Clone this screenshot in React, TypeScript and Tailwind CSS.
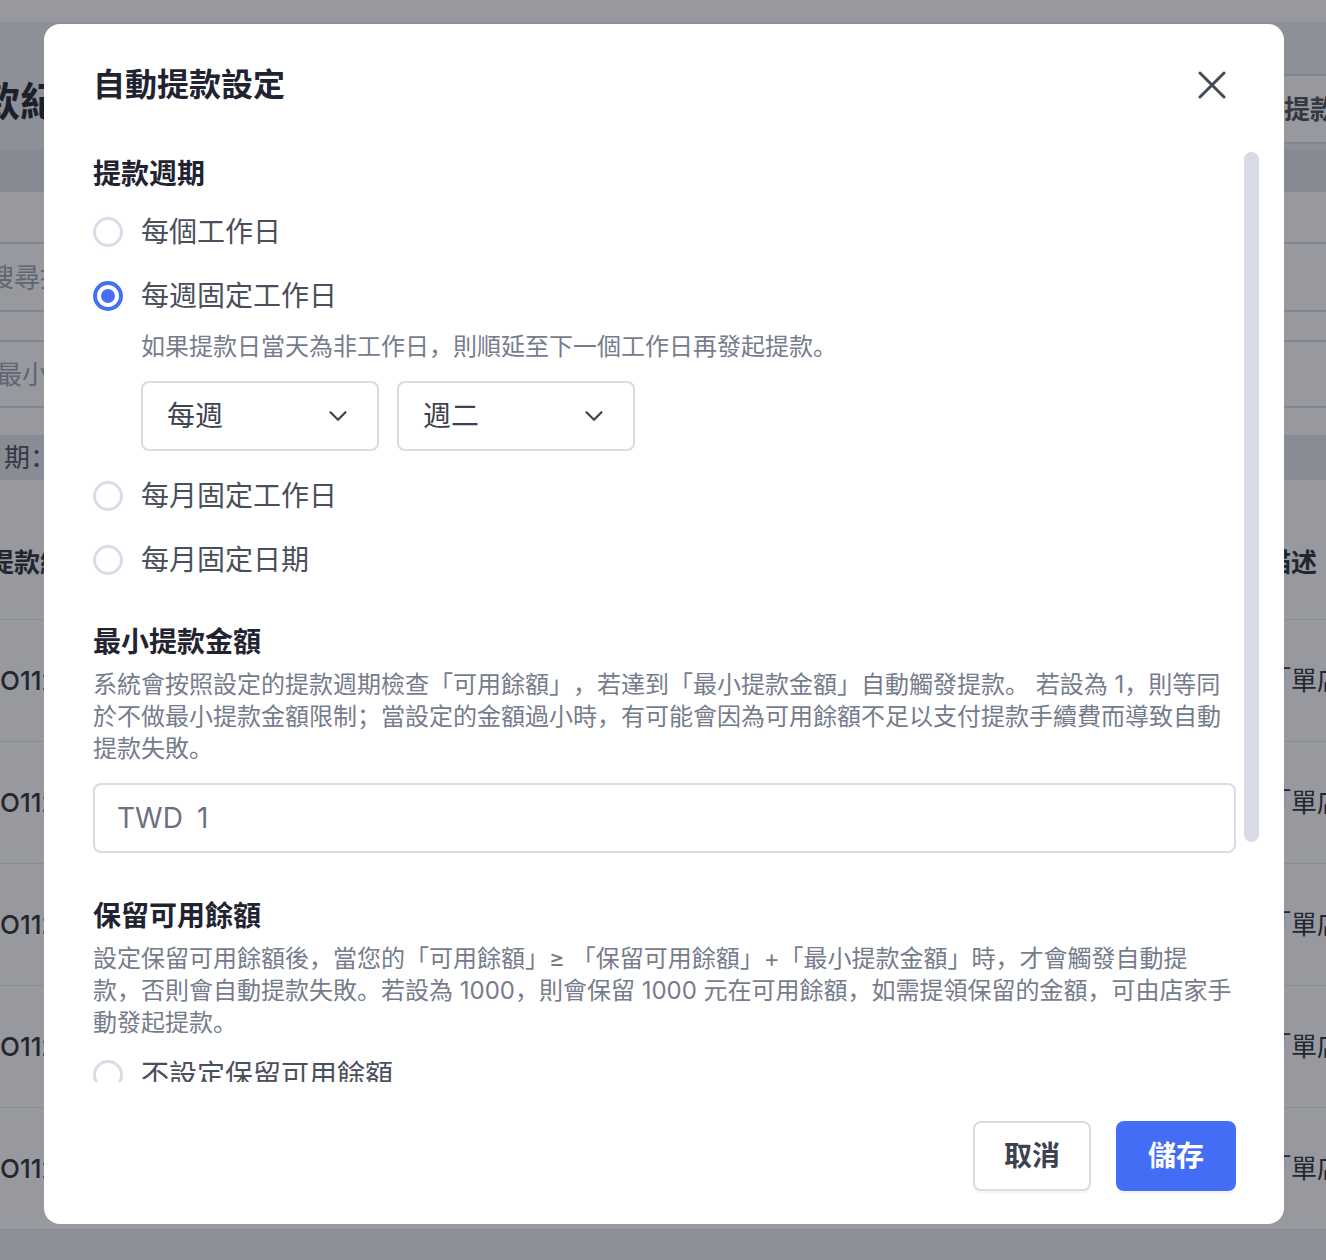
import { ChevronDown } from "lucide-react";

const rowIds = ["O11201050001", "O11201040003", "O11201030002", "O11201020001", "O11201010004"];

function BackgroundPage() {
  return (
    <div className="h-[1260px] w-full overflow-hidden bg-white">
      <div className="h-[22px] bg-white" />
      <div className="-ml-[12px] -mr-[150px] flex h-[1238px] flex-col bg-[#eceef2]">
        <div className="flex h-[128px] items-start justify-between pt-[52px]">
          <h1 className="-ml-[48px] text-[40px] font-bold leading-[56px] text-[#1f2430]">提款紀錄</h1>
          <button className="mr-[62px] h-[70px] rounded-lg border-2 border-[#d9dbe6] bg-white px-6 text-[26px] font-bold text-[#4a4f5c]">
            自動提款設定
          </button>
        </div>
        <div className="h-[42px] bg-[#e2e4ea]" />
        <div className="flex flex-col bg-white pt-[50px]">
          <div className="flex h-[70px] items-center border-y-2 border-[#d9dbe6] text-[26px] text-[#9aa0ad]">搜尋提款編號</div>
          <div className="mt-[28px] flex h-[68px] items-center border-y-2 border-[#d9dbe6] pl-[8px] text-[26px] text-[#9aa0ad]">最小金額</div>
          <div className="mt-[27px] flex h-[45px] items-center bg-[#e6e8ed] text-[26px] text-[#4a4f5c]">
            <span className="-ml-[10px]">日期：</span>
          </div>
          <div className="mt-[25px] flex h-[115px] items-center justify-between border-b border-[#e3e5ea] text-[26px] font-bold text-[#2b2f3a]">
            <span>提款編號</span>
            <span className="w-[211px] whitespace-nowrap">描述</span>
          </div>
          {rowIds.map((id) => (
            <div key={id} className="flex h-[122px] items-center justify-between border-b border-[#e3e5ea] text-[26px] text-[#2b2f3a]">
              <span className="pl-[12px] font-medium">{id}</span>
              <span className="w-[211px] whitespace-nowrap">「單店自動提款」</span>
            </div>
          ))}
        </div>
      </div>
    </div>
  );
}

function Radio({ checked = false, label }: { checked?: boolean; label: string }) {
  return (
    <label className="flex h-[40px] items-center gap-[18px]">
      {checked ? (
        <span className="flex h-[30px] w-[30px] items-center justify-center rounded-full border-[4px] border-[#4570f4]">
          <span className="h-[14px] w-[14px] rounded-full bg-[#4570f4]" />
        </span>
      ) : (
        <span className="h-[30px] w-[30px] rounded-full border-[3px] border-[#d9dbe6]" />
      )}
      <span className="text-[28px] leading-[40px] text-[#4a4f5c]">{label}</span>
    </label>
  );
}

function SelectBox({ value }: { value: string }) {
  return (
    <div className="flex h-[70px] w-[238px] items-center justify-between rounded-lg border-2 border-[#d9dbe6] pl-[24px] pr-[24px]">
      <span className="text-[28px] text-[#3d4250]">{value}</span>
      <ChevronDown className="h-[30px] w-[30px] text-[#3d4250]" strokeWidth={1.7} />
    </div>
  );
}

export default function App() {
  return (
    <div className="relative h-[1260px] w-full overflow-hidden font-['Inter','Noto_Sans_CJK_SC',sans-serif]">
      <BackgroundPage />

      <div className="absolute inset-0 bg-[rgba(24,28,40,0.45)] pl-[44px] pt-[24px]">
        <div className="flex h-[1200px] w-[1240px] flex-col rounded-2xl bg-white">
          {/* header */}
          <div className="flex h-[122px] shrink-0 items-center justify-between pl-[49px] pr-[58px]">
            <h2 className="text-[32px] font-bold text-[#1f2430]">自動提款設定</h2>
            <svg width="28" height="28" viewBox="0 0 28 28" fill="none" stroke="#454a57" strokeWidth="3" strokeLinecap="round">
              <path d="M2 2L26 26M26 2L2 26" />
            </svg>
          </div>

          {/* scroll body */}
          <div className="relative flex-1 overflow-hidden pl-[49px] pr-[48px] [text-spacing-trim:space-all]">
            <div className="absolute right-[25px] top-[6px] h-[690px] w-[15px] rounded-full bg-[#d8dae4]" />

            <div className="pt-[8px]">
              <h3 className="text-[28px] font-bold leading-[40px] text-[#1f2430]">提款週期</h3>
              <div className="mt-[18px]">
                <Radio label="每個工作日" />
              </div>
              <div className="mt-[24px]">
                <Radio checked label="每週固定工作日" />
              </div>
              <div className="pl-[48px]">
                <p className="mt-[15px] text-[24px] leading-[32px] text-[#767c8c]">
                  如果提款日當天為非工作日，則順延至下一個工作日再發起提款。
                </p>
                <div className="mt-[18px] flex gap-[18px]">
                  <SelectBox value="每週" />
                  <SelectBox value="週二" />
                </div>
              </div>
              <div className="mt-[25px]">
                <Radio label="每月固定工作日" />
              </div>
              <div className="mt-[24px]">
                <Radio label="每月固定日期" />
              </div>

              <h3 className="mt-[42px] text-[28px] font-bold leading-[40px] text-[#1f2430]">最小提款金額</h3>
              <p className="mt-[7px] text-[24px] leading-[32px] text-[#767c8c]">
                系統會按照設定的提款週期檢查「可用餘額」，若達到「最小提款金額」自動觸發提款。 若設為 1，則等同
                <br />
                於不做最小提款金額限制；當設定的金額過小時，有可能會因為可用餘額不足以支付提款手續費而導致自動
                <br />
                提款失敗。
              </p>
              <div className="mt-[18px] flex h-[70px] items-center gap-[14px] rounded-lg border-2 border-[#d9dbe6] px-[22px] text-[28px] text-[#6b7080]">
                <span>TWD</span>
                <span>1</span>
              </div>

              <h3 className="mt-[43px] text-[28px] font-bold leading-[40px] text-[#1f2430]">保留可用餘額</h3>
              <p className="mt-[7px] text-[24px] leading-[32px] text-[#767c8c]">
                設定保留可用餘額後，當您的「可用餘額」≥ 「保留可用餘額」+「最小提款金額」時，才會觸發自動提
                <br />
                款，否則會自動提款失敗。若設為 1000，則會保留 1000 元在可用餘額，如需提領保留的金額，可由店家手
                <br />
                動發起提款。
              </p>
              <div className="mt-[16px]">
                <Radio label="不設定保留可用餘額" />
              </div>
            </div>
          </div>

          {/* footer */}
          <div className="flex h-[142px] shrink-0 justify-end gap-[25px] pr-[48px] pt-[39px]">
            <button className="h-[70px] w-[118px] rounded-lg border-2 border-[#d9dbe6] bg-white text-[28px] font-bold text-[#3d4250] shadow-[0_3px_0_rgba(0,0,0,0.03)]">
              取消
            </button>
            <button className="h-[70px] w-[120px] rounded-lg bg-[#446df5] text-[28px] font-bold text-white shadow-[0_3px_0_rgba(0,0,0,0.04)]">
              儲存
            </button>
          </div>
        </div>
      </div>
    </div>
  );
}
